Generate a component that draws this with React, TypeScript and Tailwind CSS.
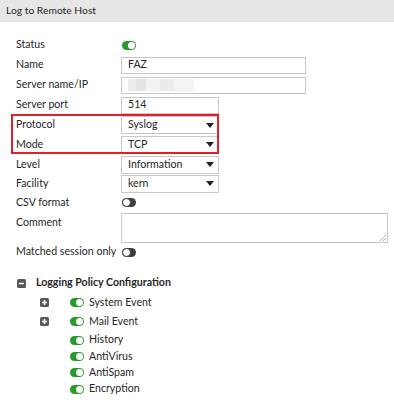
import React from "react";

function Toggle({ on }: { on: boolean }) {
    // small pill switch used all over the form
    return on ? (
        <span className="relative inline-block w-[14px] h-[9px] rounded-full bg-[#2a9a2a]">
            <span className="absolute right-[1px] top-[1px] w-[7px] h-[7px] rounded-full bg-white" />
        </span>
    ) : (
        <span className="relative inline-block w-[14px] h-[9px] rounded-full bg-[#3d3d3d]">
            <span className="absolute left-0 top-0 w-[9px] h-[9px] rounded-full bg-white border-[1.5px] border-[#3d3d3d]" />
        </span>
    );
}

function Row({ label, children, className = "h-[20px]" }: { label: string; children?: React.ReactNode; className?: string }) {
    return (
        <div className={`flex items-center ${className}`}>
            <div className="w-[105px] shrink-0 whitespace-nowrap">{label}</div>
            {children}
        </div>
    );
}

function Select({ value }: { value: string }) {
    return (
        <div className="flex items-center justify-between w-[98px] h-[18px] border border-[#c8c8c8] bg-white pl-[6px] pr-[4px]">
            <span>{value}</span>
            <svg width="8" height="5" viewBox="0 0 8 5"><path d="M0 0h8L4 5z" fill="#222" /></svg>
        </div>
    );
}

function SquareIcon({ plus }: { plus?: boolean }) {
    return (
        <svg width="9" height="9" viewBox="0 0 9 9">
            <rect x="0" y="0" width="9" height="9" rx="1.5" fill="#5a5a5a" />
            <rect x="2" y="3.75" width="5" height="1.5" fill="#fff" />
            {plus && <rect x="3.75" y="2" width="1.5" height="5" fill="#fff" />}
        </svg>
    );
}

export default function App() {
    const inputCls = "h-[17px] border border-[#c8c8c8] bg-white pl-[6px] flex items-center";
    const events = ["History", "AntiVirus", "AntiSpam", "Encryption"];

    return (
        <div className="w-[394px] h-[400px] bg-white text-[#262626] text-[10.6px] overflow-hidden" style={{ fontFamily: "Lato, 'Open Sans', sans-serif" }}>
            {/* header */}
            <div className="h-[22px] bg-[#e6e6e6] pl-[6px] flex items-center text-[10.3px]">Log to Remote Host</div>

            <div className="pl-[16px] pt-[13px]">
                <Row label="Status">
                    <span className="pl-[1px] flex"><Toggle on /></span>
                </Row>
                <Row label="Name">
                    <div className={`${inputCls} w-[185px]`}>FAZ</div>
                </Row>
                <Row label="Server name/IP">
                    <div className={`${inputCls} w-[185px] gap-0`}>
                        <span className="w-[8px] h-[12px] bg-[#ececec]" />
                        <span className="w-[10px] h-[12px] bg-[#e4e4e4]" />
                        <span className="w-[14px] h-[12px] bg-[#f3f3f3]" />
                        <span className="w-[14px] h-[12px] bg-[#ebebeb]" />
                        <span className="w-[20px] h-[12px] bg-[#f4f4f4]" />
                    </div>
                </Row>
                <Row label="Server port">
                    <div className={`${inputCls} w-[98px]`}>514</div>
                </Row>

                {/* highlighted pair */}
                <div className="relative">
                    <Row label="Protocol"><Select value="Syslog" /></Row>
                    <Row label="Mode" className="h-[19px]"><Select value="TCP" /></Row>
                    <div className="absolute left-[-5px] top-[-1px] w-[208px] h-[40px] border-2 border-[#e0202a] pointer-events-none" />
                </div>

                <Row label="Level" className="h-[20px] pt-[1px]"><Select value="Information" /></Row>
                <Row label="Facility" className="h-[19px]"><Select value="kern" /></Row>
                <Row label="CSV format" className="h-[19px]">
                    <span className="pl-[1px] flex"><Toggle on={false} /></span>
                </Row>
                <div className="flex items-start pt-[1px]">
                    <div className="w-[105px] shrink-0 pt-[2px]">Comment</div>
                    <div className="relative w-[267px] h-[30px] border border-[#c8c8c8] bg-white">
                        <svg className="absolute right-[1px] bottom-[1px]" width="6" height="6" viewBox="0 0 6 6">
                            <path d="M6 0L0 6M6 3L3 6" stroke="#999" strokeWidth="0.8" />
                        </svg>
                    </div>
                </div>
                <Row label="Matched session only" className="h-[18px]">
                    <span className="pl-[1px] flex"><Toggle on={false} /></span>
                </Row>

                {/* policy tree */}
                <div className="mt-[12px] flex items-center gap-[10px] h-[20px] pl-[1px]">
                    <SquareIcon />
                    <span className="font-bold">Logging Policy Configuration</span>
                </div>
                <div className="pl-[24px]">
                    {["System Event", "Mail Event"].map((e) => (
                        <div key={e} className="flex items-center h-[19px]">
                            <span className="w-[30px] flex"><SquareIcon plus /></span>
                            <Toggle on />
                            <span className="ml-[5px]">{e}</span>
                        </div>
                    ))}
                    <div className="pl-[30px] pt-[1px]">
                        {events.map((e) => (
                            <div key={e} className="flex items-center h-[16.3px]">
                                <Toggle on />
                                <span className="ml-[5px]">{e}</span>
                            </div>
                        ))}
                    </div>
                </div>
            </div>
        </div>
    );
}
